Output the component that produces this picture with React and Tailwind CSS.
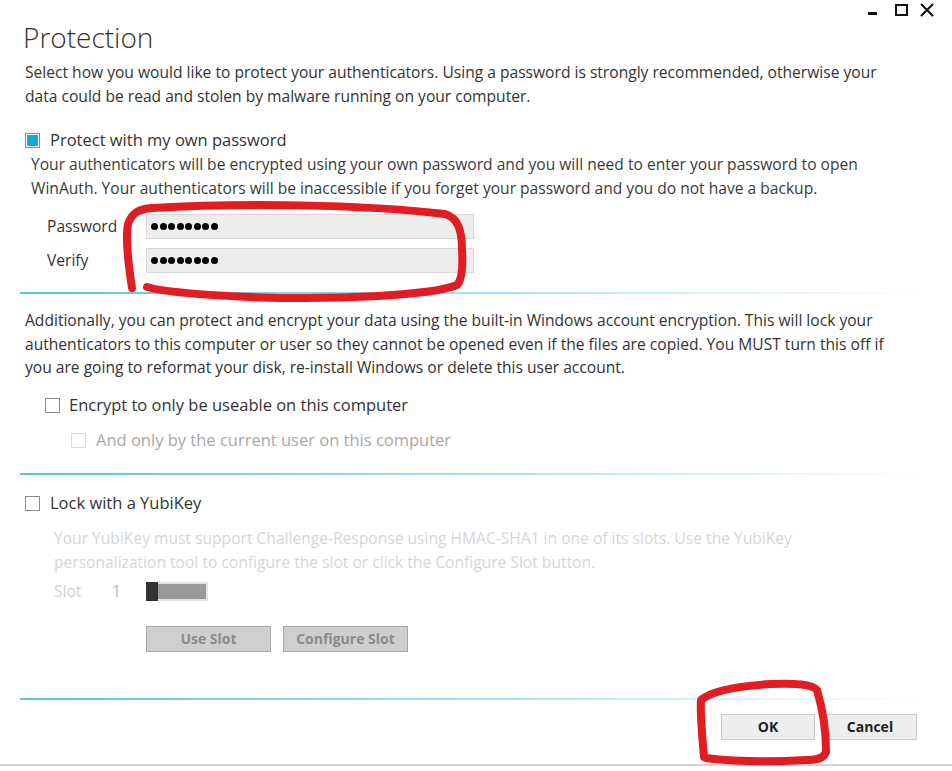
import React from 'react'

const font = { fontFamily: '"Open Sans", "Noto Sans", sans-serif' }

function Check({ checked, disabled }) {
  return (
    <div
      className={`w-[15px] h-[15px] border flex items-center justify-center bg-white shrink-0 ${
        disabled ? 'border-[#dcdcdc]' : 'border-[#8a8a8a]'
      }`}
    >
      {checked && <div className="w-[11px] h-[11px] bg-[#0fa8df]" />}
    </div>
  )
}

function Separator() {
  return <div className="ml-[20px] w-[900px] h-[2px] bg-gradient-to-r from-[#56c2e2] via-[#a6dff0] to-white" />
}

function Dots() {
  return (
    <div className="flex gap-[1.5px] pl-[4px]">
      {Array.from({ length: 8 }).map((_, i) => (
        <div key={i} className="w-[7px] h-[7px] rounded-full bg-black" />
      ))}
    </div>
  )
}

function WindowControls() {
  return (
    <div className="absolute top-0 right-0">
      <svg width="90" height="22" viewBox="0 0 90 22">
        <rect x="6" y="12" width="9" height="3" fill="#111" />
        <rect x="34" y="5" width="11" height="10" fill="none" stroke="#111" strokeWidth="2" />
        <path d="M59 4 L71 16 M71 4 L59 16" stroke="#111" strokeWidth="2" />
      </svg>
    </div>
  )
}

function Annotations() {
  return (
    <svg className="absolute inset-0 pointer-events-none" width="952" height="771" viewBox="0 0 952 771">
      <g fill="none" stroke="#e21c23" strokeWidth="8" strokeLinecap="round" strokeLinejoin="round">
        <path d="M132 288 C128 262 125 238 128 224 C132 212 140 209 152 208 C240 203 360 204 445 214 C458 218 462 230 462 250 C463 268 462 280 457 285 C430 296 330 300 250 297 C200 295 165 292 147 287" />
        <path d="M704 757 C702 735 700 712 701 700 C712 690 740 686 770 684 C795 683 812 684 817 690 C823 710 826 735 826 752 C824 758 818 760 806 760 C770 762 730 761 706 758" />
      </g>
    </svg>
  )
}

export default function App() {
  return (
    <div className="relative w-[952px] h-[771px] bg-white text-[#333] overflow-hidden" style={font}>
      <WindowControls />

      <div className="flex flex-col">
        <h1 className="pl-[23px] pt-[19px] text-[28px] leading-[36px] font-light text-[#333]">Protection</h1>

        <p className="mt-[5px] pl-[25px] text-[15.6px] leading-[24px] whitespace-nowrap">
          Select how you would like to protect your authenticators. Using a password is strongly recommended, otherwise your
          <br />
          data could be read and stolen by malware running on your computer.
        </p>

        <div className="mt-[20px] pl-[25px] h-[24px] flex items-center gap-[10px]">
          <Check checked />
          <span className="text-[16.5px]">Protect with my own password</span>
        </div>

        <p className="pl-[31px] text-[15.6px] leading-[24px] whitespace-nowrap text-[#3a3a3a]">
          Your authenticators will be encrypted using your own password and you will need to enter your password to open
          <br />
          WinAuth. Your authenticators will be inaccessible if you forget your password and you do not have a backup.
        </p>

        <div className="mt-[14px] flex flex-col gap-[9px]">
          {['Password', 'Verify'].map(label => (
            <div key={label} className="flex items-center h-[25px]">
              <span className="w-[146px] pl-[47px] text-[15.6px]">{label}</span>
              <div className="w-[328px] h-[25px] bg-[#ededed] border border-[#d8d8d8] flex items-center">
                <Dots />
              </div>
            </div>
          ))}
        </div>

        <div className="mt-[19px]">
          <Separator />
        </div>

        <p className="mt-[15px] pl-[25px] text-[15.6px] leading-[23.5px] whitespace-nowrap">
          Additionally, you can protect and encrypt your data using the built-in Windows account encryption. This will lock your
          <br />
          authenticators to this computer or user so they cannot be opened even if the files are copied. You MUST turn this off if
          <br />
          you are going to reformat your disk, re-install Windows or delete this user account.
        </p>

        <div className="mt-[14px] pl-[45px] h-[24px] flex items-center gap-[9px]">
          <Check />
          <span className="text-[16.5px]">Encrypt to only be useable on this computer</span>
        </div>

        <div className="mt-[11px] pl-[71px] h-[24px] flex items-center gap-[10px]">
          <Check disabled />
          <span className="text-[16.5px] text-[#a8a8a8]">And only by the current user on this computer</span>
        </div>

        <div className="mt-[20px]">
          <Separator />
        </div>

        <div className="mt-[17px] pl-[25px] h-[24px] flex items-center gap-[10px]">
          <Check />
          <span className="text-[16.5px]">Lock with a YubiKey</span>
        </div>

        <p className="mt-[10px] pl-[54px] text-[15.6px] leading-[24px] whitespace-nowrap text-[#d6d6d6]">
          Your YubiKey must support Challenge-Response using HMAC-SHA1 in one of its slots. Use the YubiKey
          <br />
          personalization tool to configure the slot or click the Configure Slot button.
        </p>

        <div className="mt-[6px] h-[24px] flex items-center text-[15.6px] text-[#d0d0d0]">
          <span className="pl-[54px] w-[112px]">Slot</span>
          <span className="w-[34px] text-[#b8b8b8]">1</span>
          <div className="flex h-[19px]">
            <div className="w-[12px] h-full bg-[#333]" />
            <div className="w-[50px] h-full bg-[#999] border-2 border-[#e2e2e2] border-l-0" />
          </div>
        </div>

        <div className="mt-[22px] pl-[146px] flex gap-[12px]">
          <button className="w-[125px] h-[26px] bg-[#cfcfcf] border border-[#aaaaaa] text-[14px] font-bold text-[#8a8a8a]">
            Use Slot
          </button>
          <button className="w-[125px] h-[26px] bg-[#cfcfcf] border border-[#aaaaaa] text-[14px] font-bold text-[#8a8a8a]">
            Configure Slot
          </button>
        </div>

        <div className="mt-[46px]">
          <Separator />
        </div>

        <div className="mt-[14px] pr-[35px] flex justify-end gap-[8px]">
          <button className="w-[94px] h-[26px] bg-[#eeeeee] border border-[#cccccc] text-[14px] font-bold text-[#222]">
            OK
          </button>
          <button className="w-[94px] h-[26px] bg-[#eeeeee] border border-[#cccccc] text-[14px] font-bold text-[#222]">
            Cancel
          </button>
        </div>
      </div>

      <div className="absolute left-0 right-0 top-[764px] h-[2px] bg-[#d4d4d4]" />
      <Annotations />
    </div>
  )
}
